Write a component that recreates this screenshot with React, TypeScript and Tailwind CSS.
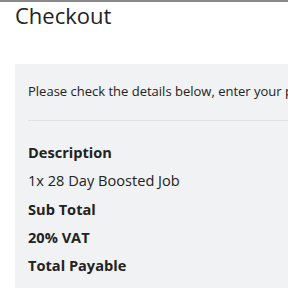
const rows = [
  { label: 'Sub Total' },
  { label: '20% VAT' },
  { label: 'Total Payable' },
];

export default function App() {
  return (
    <div className="w-[288px] h-[288px] overflow-hidden bg-white border-t-2 border-[#8a8a8a]" style={{ fontFamily: "'Open Sans', sans-serif" }}>
      <h1 className="pl-[15px] text-[22px] leading-[26px] text-[#222]">Checkout</h1>
      <div className="ml-[15px] mt-[36px] w-[400px] bg-[#f1f2f4] pl-[13px] pt-[18px] pb-10 text-[#222]">
        <p className="text-[13px] leading-[18px] whitespace-nowrap">
          Please check the details below, enter your payment details and submit
        </p>
        <div className="mt-[20px] h-px bg-[#e0e1e4]" />
        <div className="pt-[17px] text-[14.6px] leading-[28.3px]">
          <div className="font-bold">Description</div>
          <div>1x 28 Day Boosted Job</div>
          {rows.map(r => (
            <div key={r.label} className="font-bold">{r.label}</div>
          ))}
        </div>
      </div>
    </div>
  );
}
